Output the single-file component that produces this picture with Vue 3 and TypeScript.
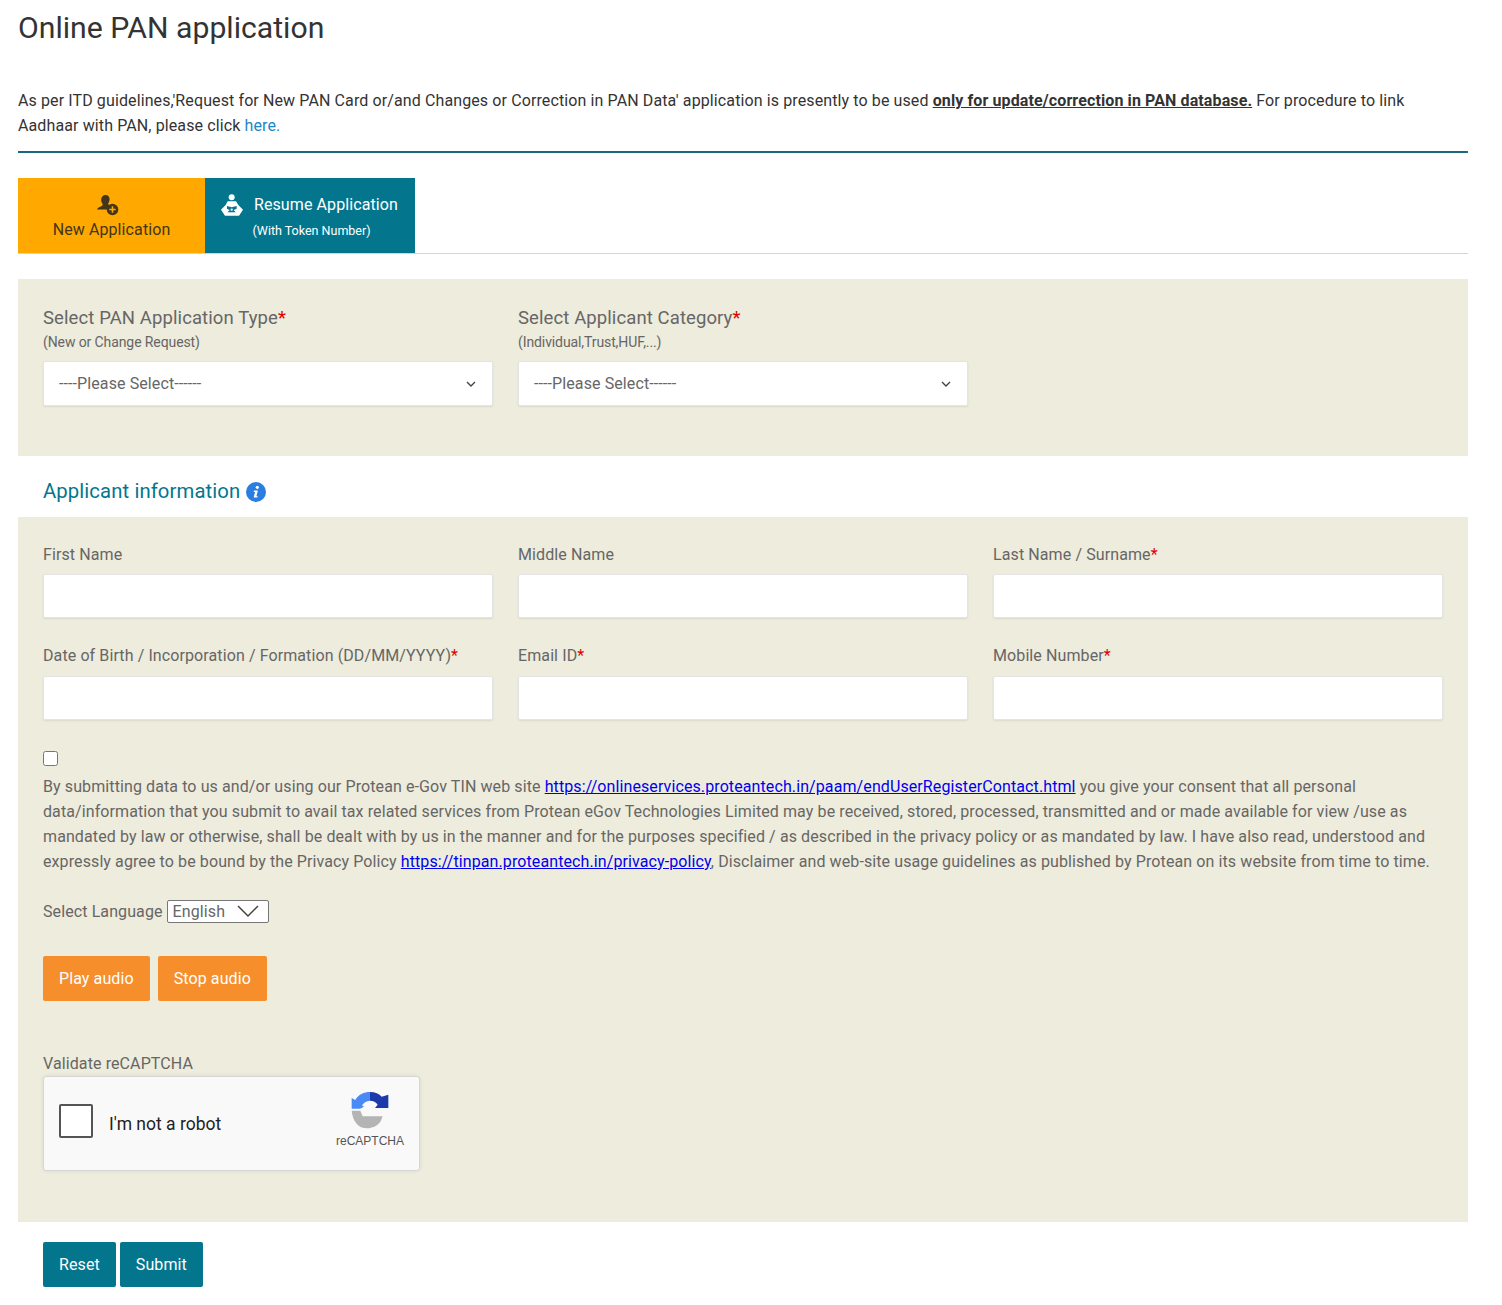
<script setup lang="ts">
interface Field {
  label: string
  required: boolean
}

const fields: Field[] = [
  { label: 'First Name', required: false },
  { label: 'Middle Name', required: false },
  { label: 'Last Name / Surname', required: true },
  { label: 'Date of Birth / Incorporation / Formation (DD/MM/YYYY)', required: true },
  { label: 'Email ID', required: true },
  { label: 'Mobile Number', required: true }
]

const selects = [
  { label: 'Select PAN Application Type', hint: '(New or Change Request)' },
  { label: 'Select Applicant Category', hint: '(Individual,Trust,HUF,...)' }
]
</script>

<template>
  <main class="page">
    <h1 class="title">Online PAN application</h1>
    <p class="intro">
      As per ITD guidelines,'Request for New PAN Card or/and Changes or Correction in PAN Data' application is presently to be used
      <strong>only for update/correction in PAN database.</strong>
      For procedure to link Aadhaar with PAN, please click <a href="#" class="here">here.</a>
    </p>
    <hr class="rule" />

    <div class="tabs">
      <button class="tab tab-new" type="button">
        <svg class="tab-icon" width="24" height="22" viewBox="0 0 24 22" aria-hidden="true">
          <path fill="#43361a" d="M9.500 1c2.600 0 4.300 2 4.100 4.500-.1 1.500-.7 3-1.500 4 .3 1 .9 1.500 1.500 1.900-1.300 1-2 2.500-2 4.100H1c.3-1.200 2.300-2.500 5.200-3.700.5-.6.5-1.500.2-2.300C5.400 8 5 6.600 5.200 5.200 5.500 2.700 7.200 1 9.500 1z" />
          <circle cx="16.500" cy="15.500" r="5.800" fill="#43361a" />
          <path stroke="#ffa800" stroke-width="1.600" d="M16.500 12.300v6.400M13.300 15.500h6.400" />
        </svg>
        <span>New Application</span>
      </button>
      <button class="tab tab-resume" type="button">
        <span class="resume-top">
          <svg width="22" height="22" viewBox="18 25 66 66" aria-hidden="true">
            <circle cx="50" cy="35" r="9" fill="#fff" />
            <path fill="#fff" d="M38 47H63L70 58L84 72L72 90H30L18 72L32 58Z" />
            <path fill="#03768e" d="M36 61L50 65L65 61V69L56 73L62 80H38L44 73L36 69Z" />
            <path fill="#fff" d="M47 69H53V75H47Z" />
          </svg>
          <span>Resume Application</span>
        </span>
        <span class="resume-sub">(With Token Number)</span>
      </button>
    </div>

    <section class="panel panel-type">
      <div class="grid">
        <div v-for="item in selects" :key="item.label" class="field">
          <label class="select-label">{{ item.label }}<span class="req">*</span></label>
          <small class="hint">{{ item.hint }}</small>
          <select class="control control-select">
            <option>----Please Select------</option>
          </select>
        </div>
      </div>
    </section>

    <h2 class="section-title">
      Applicant information
      <svg width="20" height="20" viewBox="0 0 20 20" aria-hidden="true">
        <circle cx="10" cy="10" r="10" fill="#2a7de1" />
        <circle cx="11.300" cy="5.300" r="1.600" fill="#fff" />
        <path fill="#fff" d="M8 8.600h3.900l-1.500 5.700h1.400l-.4 1.300H7.600l1.500-5.700H7.700z" />
      </svg>
    </h2>

    <section class="panel panel-info">
      <div class="grid grid-fields">
        <div v-for="f in fields" :key="f.label" class="field">
          <label class="field-label">{{ f.label }}<span v-if="f.required" class="req">*</span></label>
          <input class="control" type="text" />
        </div>
      </div>

      <input class="consent-box" type="checkbox" />
      <p class="consent">
        By submitting data to us and/or using our Protean e-Gov TIN web site
        <a href="#">https://onlineservices.proteantech.in/paam/endUserRegisterContact.html</a>
        you give your consent that all personal data/information that you submit to avail tax related services from Protean eGov Technologies Limited may be received, stored, processed, transmitted and or made available for view /use as mandated by law or otherwise, shall be dealt with by us in the manner and for the purposes specified / as described in the privacy policy or as mandated by law. I have also read, understood and expressly agree to be bound by the Privacy Policy
        <a href="#">https://tinpan.proteantech.in/privacy-policy</a>, Disclaimer and web-site usage guidelines as published by Protean on its website from time to time.
      </p>

      <div class="language">
        <span>Select Language</span>
        <select class="lang-select">
          <option>English</option>
        </select>
      </div>

      <div class="audio">
        <button class="btn btn-orange" type="button">Play audio</button>
        <button class="btn btn-orange" type="button">Stop audio</button>
      </div>

      <p class="validate">Validate reCAPTCHA</p>
      <div class="captcha">
        <span class="captcha-check"></span>
        <span class="captcha-text">I'm not a robot</span>
        <div class="captcha-logo">
          <svg width="38" height="38" viewBox="33 20 114 112" aria-hidden="true">
            <path fill="#b4b4b4" d="M35 78H61L68 95H128L122 110C112 125 95 131 82 131C55 131 38 110 35 78Z" />
            <path fill="#4a8af4" d="M35 72V40L46 46C55 30 72 22 90 22V48C80 50 72 52 66 62L72 66L60 72Z" />
            <path fill="#1c3aa9" d="M90 22C105 22 118 28 125 36L145 30V70H105L113 60C108 52 100 48 90 48Z" />
          </svg>
          <span>reCAPTCHA</span>
        </div>
      </div>
    </section>

    <div class="actions">
      <button class="btn btn-teal" type="button">Reset</button>
      <button class="btn btn-teal" type="button">Submit</button>
    </div>
  </main>
</template>

<style scoped>
.page {
  box-sizing: border-box;
  width: 1450px;
  margin-left: 18px;
  font-family: Roboto, "Liberation Sans", sans-serif;
  font-size: 16px;
  line-height: 25px;
  letter-spacing: 0.1px;
  color: #333;
}

.title {
  margin: 0;
  padding-top: 9px;
  height: 88px;
  box-sizing: border-box;
  font-size: 30.2px;
  line-height: 38px;
  font-weight: 400;
  letter-spacing: 0;
}

.intro {
  margin: 0;
  padding-right: 30px;
  letter-spacing: 0.11px;
}

.intro strong {
  font-weight: 700;
  text-decoration: underline;
}

.here {
  color: #1b87c9;
  text-decoration: none;
}

.rule {
  margin: 13px 0 25px;
  height: 2px;
  border: 0;
  background: #17697f;
}

.tabs {
  display: flex;
  height: 76px;
  box-sizing: border-box;
  border-bottom: 1px solid #d4d4d4;
  margin-bottom: 25px;
}

.tab {
  border: 0;
  padding: 0;
  height: 75px;
  font-family: inherit;
  font-size: 16px;
  letter-spacing: inherit;
  display: flex;
  flex-direction: column;
  align-items: center;
}

.tab-new {
  width: 187px;
  background: #ffa800;
  color: #43361a;
  padding-top: 16px;
}

.tab-icon {
  margin-bottom: 4px;
  margin-left: -8px;
}

.tab-resume {
  width: 210px;
  background: #03768e;
  color: #fff;
  padding-top: 16px;
}

.resume-top {
  display: flex;
  align-items: center;
  gap: 11px;
  line-height: 22px;
  margin-left: -1px;
}

.resume-sub {
  margin-top: 5px;
  margin-left: 3px;
  font-size: 12.5px;
  letter-spacing: 0;
  line-height: 20px;
}

.panel {
  background: #eeecdc;
  padding: 0 25px;
}

.panel-type {
  height: 177px;
  padding-top: 26px;
  box-sizing: border-box;
}

.panel-info {
  height: 705px;
  padding-top: 25px;
  box-sizing: border-box;
}

.grid {
  display: grid;
  grid-template-columns: repeat(3, 450px);
  column-gap: 25px;
}

.grid-fields {
  row-gap: 25px;
}

.field {
  display: flex;
  flex-direction: column;
}

.select-label {
  padding-top: 1px;
  font-size: 18.5px;
  line-height: 24px;
  color: #666;
}

.hint {
  font-size: 14px;
  letter-spacing: -0.1px;
  line-height: 25px;
  color: #666;
}

.field-label {
  font-size: 16px;
  line-height: 25px;
  color: #666;
  margin-bottom: 7.4px;
}

.req {
  color: #e00000;
  font-weight: 400;
}

.control {
  box-sizing: border-box;
  width: 450px;
  height: 44px;
  border: 1px solid #e4e4e4;
  border-radius: 2px;
  background-color: #fff;
  box-shadow: 0 1px 2px rgba(0, 0, 0, 0.08);
  padding: 0 15px;
  font-family: inherit;
  font-size: 16px;
  letter-spacing: inherit;
  color: #666;
}

.control-select {
  height: 45px;
  margin-top: 6px;
  appearance: none;
  background-image: url("data:image/svg+xml,%3Csvg xmlns='http://www.w3.org/2000/svg' width='10' height='6' viewBox='0 0 10 6'%3E%3Cpath d='M1 1l4 4 4-4' fill='none' stroke='%23444' stroke-width='1.400'/%3E%3C/svg%3E");
  background-repeat: no-repeat;
  background-position: right 16px center;
}

.section-title {
  display: flex;
  align-items: center;
  gap: 6px;
  height: 61px;
  box-sizing: border-box;
  margin: 0;
  padding: 10px 0 0 25px;
  font-size: 20.3px;
  font-weight: 400;
  letter-spacing: inherit;
  color: #03768e;
}

.consent-box {
  display: block;
  width: 15px;
  height: 15px;
  margin: 31.2px 0 0;
}

.consent {
  margin: 8px 0 0;
  color: #666;
}

.consent a {
  color: #0000ee;
  text-decoration: underline;
}

.language {
  display: flex;
  align-items: center;
  gap: 4px;
  margin-top: 25px;
  height: 25px;
  color: #666;
}

.lang-select {
  box-sizing: border-box;
  width: 102px;
  height: 23px;
  padding: 0 5px;
  border: 1px solid #777;
  border-radius: 2px;
  appearance: none;
  background-color: #fff;
  background-image: url("data:image/svg+xml,%3Csvg xmlns='http://www.w3.org/2000/svg' width='22' height='13' viewBox='0 0 22 13'%3E%3Cpath d='M1 1l10 10L21 1' fill='none' stroke='%23444' stroke-width='1.500'/%3E%3C/svg%3E");
  background-repeat: no-repeat;
  background-position: right 9px center;
  font-family: inherit;
  font-size: 16px;
  letter-spacing: inherit;
  color: #666;
}

.audio {
  display: flex;
  gap: 8px;
  margin-top: 32px;
}

.btn {
  height: 45px;
  border: 0;
  border-radius: 2px;
  padding: 0 16px;
  font-family: inherit;
  font-size: 16px;
  letter-spacing: inherit;
  color: #fff;
}

.btn-orange {
  background: #f68f2b;
}

.btn-teal {
  background: #03768e;
}

.validate {
  margin: 50px 0 0;
  color: #666;
}

.captcha {
  box-sizing: border-box;
  display: flex;
  align-items: flex-start;
  width: 377px;
  height: 95px;
  padding: 0 15px;
  background: #f9f9f9;
  border: 1px solid #d6d6d6;
  border-radius: 3px;
  box-shadow: 0 0 4px rgba(0, 0, 0, 0.08);
}

.captcha-check {
  box-sizing: border-box;
  width: 34px;
  height: 34px;
  margin-top: 27px;
  background: #fff;
  border: 2px solid #555;
  border-radius: 2px;
}

.captcha-text {
  margin: 35px 0 0 16px;
  color: #222;
  font-size: 17.5px;
  letter-spacing: 0;
}

.captcha-logo {
  margin: 14px 0 0 auto;
  display: flex;
  flex-direction: column;
  align-items: center;
  gap: 3px;
  font-family: "Liberation Sans", Arial, sans-serif;
  font-size: 12px;
  letter-spacing: 0;
  line-height: 18px;
  color: #555;
}

.actions {
  display: flex;
  gap: 4px;
  margin-top: 20px;
  padding-left: 25px;
}
</style>

<style>
html,
body {
  background: #fff;
}
</style>
